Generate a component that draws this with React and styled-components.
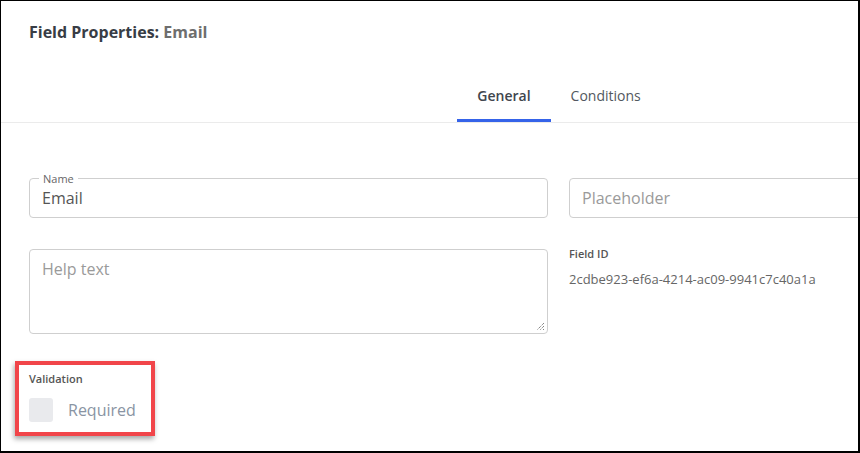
import styled, { createGlobalStyle } from 'styled-components'

const GlobalStyle = createGlobalStyle`
    * {
        box-sizing: border-box;
    }
    body {
        margin: 0;
        background: #fff;
        font-family: 'Open Sans', 'Liberation Sans', sans-serif;
    }
`

const Frame = styled.div`
    width: 860px;
    height: 453px;
    border-style: solid;
    border-color: #000;
    border-width: 1px 2px 2px 1px;
    overflow: hidden;
    background: #fff;
`

const Panel = styled.div`
    width: 1116px;
`

const Header = styled.div`
    height: 63px;
    padding: 21px 28px 0;
`

const Title = styled.h1`
    margin: 0;
    font-size: 16px;
    line-height: 20px;
    font-weight: 700;
    color: #383d45;
`

const TitleName = styled.span`
    color: #6e6e6e;
`

const TabBar = styled.div`
    display: flex;
    justify-content: center;
    border-bottom: 1px solid #ebebeb;
`

const Tab = styled.div`
    padding: 22px 20px 13px;
    font-size: 14px;
    line-height: 20px;
    font-weight: ${(p) => (p.$active ? 600 : 400)};
    color: ${(p) => (p.$active ? '#40454d' : '#525860')};
    border-bottom: 3px solid ${(p) => (p.$active ? '#3563e9' : 'transparent')};
`

const Body = styled.div`
    padding: 55px 28px 0;
`

const Grid = styled.div`
    display: grid;
    grid-template-columns: 519px 519px;
    column-gap: 21px;
    row-gap: 31px;
`

const Box = styled.div`
    position: relative;
    height: ${(p) => p.$height}px;
    border: 1px solid #cfcfcf;
    border-radius: 4px;
    padding: ${(p) => (p.$multi ? '8px 12px' : '0 12px')};
    display: flex;
    align-items: ${(p) => (p.$multi ? 'flex-start' : 'center')};
    font-size: 16px;
    line-height: 22px;
    color: ${(p) => (p.$empty ? '#9a9a9a' : '#555')};
`

const Notch = styled.span`
    position: absolute;
    top: -8px;
    left: 9px;
    padding: 0 4px;
    background: #fff;
    font-size: 11px;
    line-height: 15px;
    color: #666;
`

const Grip = styled.svg`
    position: absolute;
    right: 2px;
    bottom: 2px;
`

const Meta = styled.div`
    display: flex;
    flex-direction: column;
    gap: 8px;
    margin-top: -3px;
`

const SmallLabel = styled.div`
    font-size: 11px;
    line-height: 16px;
    font-weight: 600;
    color: #555;
`

const IdValue = styled.div`
    font-size: 13px;
    line-height: 18px;
    color: #666;
`

const Highlight = styled.div`
    width: fit-content;
    margin: 27px 0 0 -14px;
    border: 4px solid #f1454a;
    box-shadow: -1px 3px 5px rgba(0, 0, 0, 0.35);
    padding: 6px 15px 10px 10px;
`

const CheckRow = styled.label`
    display: flex;
    align-items: center;
    gap: 15px;
    margin-top: 11px;
    font-size: 16px;
    line-height: 22px;
    color: #8994a3;
`

const CheckBox = styled.span`
    width: 24px;
    height: 24px;
    border-radius: 3px;
    background: #e9eaed;
`

function App() {
    return (
        <Frame>
            <GlobalStyle />
            <Panel>
                <Header>
                    <Title>
                        Field Properties: <TitleName>Email</TitleName>
                    </Title>
                </Header>
                <TabBar>
                    <Tab $active>General</Tab>
                    <Tab>Conditions</Tab>
                </TabBar>
                <Body>
                    <Grid>
                        <Box $height={40}>
                            <Notch>Name</Notch>
                            Email
                        </Box>
                        <Box $height={40} $empty>
                            Placeholder
                        </Box>
                        <Box $height={85} $multi $empty>
                            Help text
                            <Grip width='10' height='10' viewBox='0 0 10 10'>
                                <path d='M9 2 L2 9 M9 5 L5 9 M9 8 L8 9' stroke='#555' strokeWidth='1' strokeDasharray='1 1' />
                            </Grip>
                        </Box>
                        <Meta>
                            <SmallLabel>Field ID</SmallLabel>
                            <IdValue>2cdbe923-ef6a-4214-ac09-9941c7c40a1a</IdValue>
                        </Meta>
                    </Grid>
                    <Highlight>
                        <SmallLabel>Validation</SmallLabel>
                        <CheckRow>
                            <CheckBox />
                            Required
                        </CheckRow>
                    </Highlight>
                </Body>
            </Panel>
        </Frame>
    )
}

export default App
